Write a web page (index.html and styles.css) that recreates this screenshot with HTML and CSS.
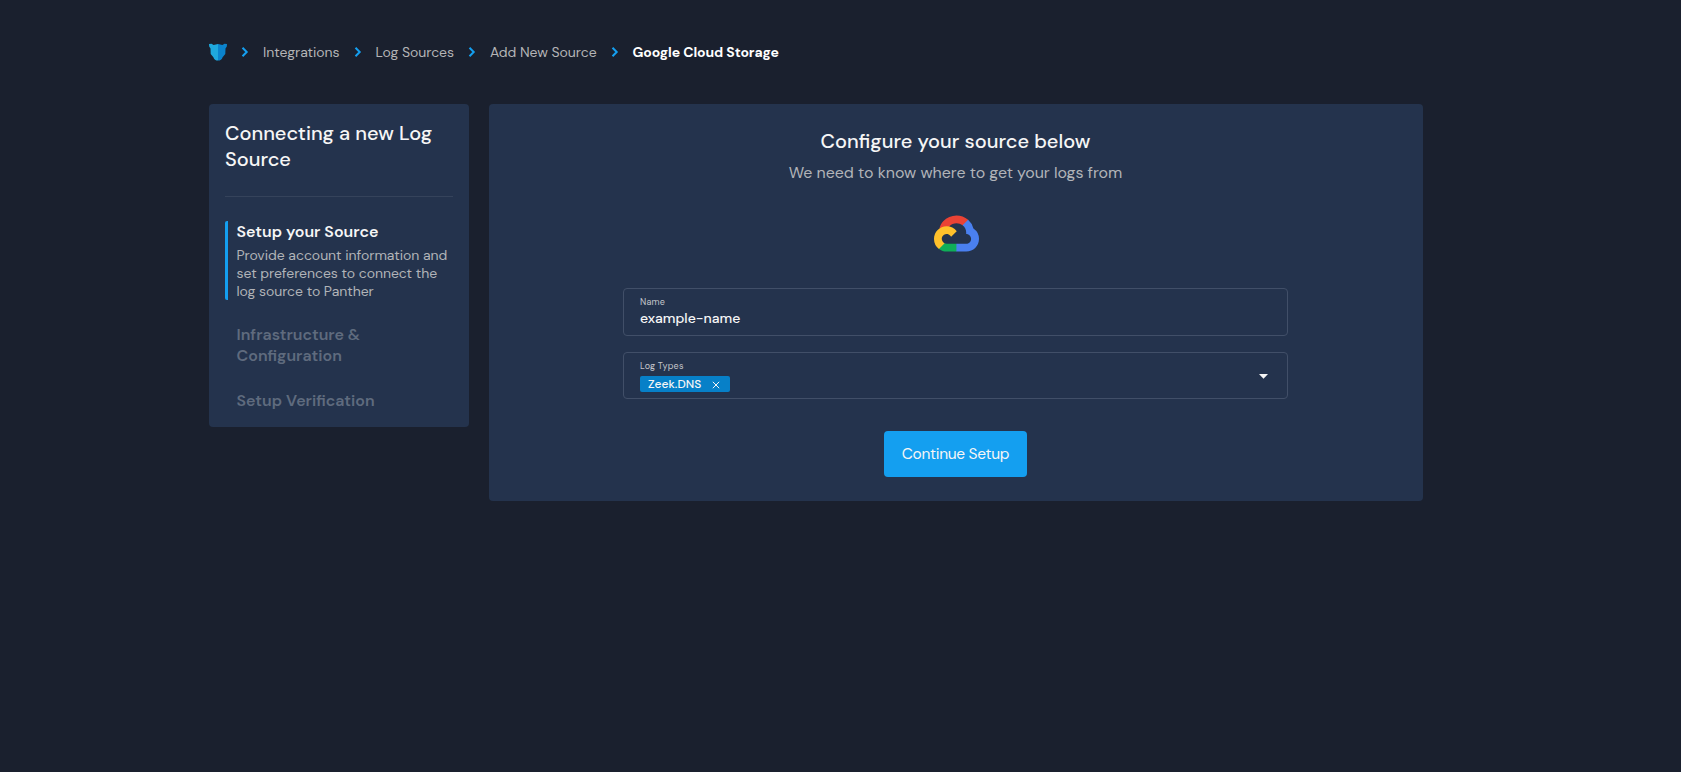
FILE: index.html
```html
<!DOCTYPE html>
<html lang="en">
<head>
<meta charset="utf-8">
<title>Google Cloud Storage</title>
<link rel="stylesheet" href="styles.css">
</head>
<body>
<div class="page">
  <nav class="crumbs">
    <svg class="logo" viewBox="0 0 18 18"><path fill="#1fa8dd" d="M0 1 2.500.700 4.600 1.900 9 1V17.600C6.700 17.600 5 16.600 4.400 14.200L1.700 11 1.500 5.400.2 3.600Z"/><path fill="#0b83cc" d="M18 1 15.500.700 13.400 1.900 9 1V17.600C11.300 17.600 13 16.600 13.600 14.200L16.300 11 16.500 5.400 17.800 3.600Z"/></svg>
    <svg class="chev" viewBox="0 0 8 10"><path d="M1.500 .8 5.700 5 1.500 9.200"/></svg>
    <a>Integrations</a>
    <svg class="chev" viewBox="0 0 8 10"><path d="M1.500 .8 5.700 5 1.500 9.200"/></svg>
    <a>Log Sources</a>
    <svg class="chev" viewBox="0 0 8 10"><path d="M1.500 .8 5.700 5 1.500 9.200"/></svg>
    <a>Add New Source</a>
    <svg class="chev" viewBox="0 0 8 10"><path d="M1.500 .8 5.700 5 1.500 9.200"/></svg>
    <b>Google Cloud Storage</b>
  </nav>
  <div class="columns">
    <aside class="card side">
      <h2>Connecting a new Log Source</h2>
      <ol class="steps">
        <li class="step active"><h3>Setup your Source</h3><p>Provide account information and<br>set preferences to connect the<br>log source to Panther</p></li>
        <li class="step"><h3>Infrastructure &amp;<br>Configuration</h3></li>
        <li class="step"><h3>Setup Verification</h3></li>
      </ol>
    </aside>
    <main class="card main">
      <h1>Configure your source below</h1>
      <p class="sub">We need to know where to get your logs from</p>
      <svg class="gcp" viewBox="0 0 256 206"><path fill="#EA4335" d="M170.252 56.819l22.253-22.253 1.483-9.370C153.437-11.678 88.976-7.500 52.420 33.920 42.267 45.423 34.734 59.764 30.717 74.573l7.970-1.123 44.505-7.340 3.436-3.513c19.797-21.742 53.270-24.667 76.128-6.168l7.496.390z"/><path fill="#4A80F0" d="M224.205 73.918a100.249 100.249 0 0 0-30.217-48.722l-31.232 31.232a55.515 55.515 0 0 1 20.379 44.037v5.544c15.350 0 27.797 12.450 27.797 27.796 0 15.352-12.446 27.573-27.797 27.573h-55.671l-5.466 5.934v33.340l5.466 5.231h55.671c39.930.310 72.553-31.494 72.864-71.424a72.303 72.303 0 0 0-31.794-60.541"/><path fill="#0FAE58" d="M71.870 205.796h55.593V161.290H71.870a27.275 27.275 0 0 1-11.498-2.498l-7.887 2.420-22.409 22.253-1.952 7.574c12.567 9.489 27.900 14.825 43.746 14.757"/><path fill="#FFC12B" d="M71.870 61.425C31.940 61.663-.237 94.228.001 134.158a72.301 72.301 0 0 0 28.222 56.880l32.248-32.246c-13.990-6.322-20.208-22.786-13.887-36.776 6.320-13.990 22.786-20.208 36.775-13.888a27.796 27.796 0 0 1 13.887 13.888l32.248-32.248A72.224 72.224 0 0 0 71.870 61.425"/></svg>
      <div class="field name"><div><label>Name</label><div class="value">example-name</div></div></div>
      <div class="field types"><div><label>Log Types</label>
        <div class="tag">Zeek.DNS<svg viewBox="0 0 8 8"><path d="M.8.8 7.200 7.200M7.200.8.8 7.200"/></svg></div></div>
        <svg class="caret" viewBox="0 0 9 5"><path d="M0 0h9L4.500 4.800Z"/></svg></div>
      <button>Continue Setup</button>
    </main>
  </div>
</div>
</body>
</html>
```
FILE: styles.css
```css
* { box-sizing: border-box; margin: 0; padding: 0; }
body { background: #1a202e; color: #f6f6f6; font-family: "DM Sans", Lato, sans-serif; font-size: 14px; }
.page { width: 1214px; margin-left: 209px; padding-top: 40px; }
.crumbs { display: flex; align-items: center; height: 24px; color: #b4b4b6; }
.crumbs a { letter-spacing: -.05px; }
.crumbs b { color: #fff; font-weight: 700; letter-spacing: -.1px; }
.logo { width: 18px; height: 18px; }
.chev { width: 8px; height: 10px; fill: none; stroke: #149ff0; stroke-width: 2; margin: 0 14px; }
.columns { display: flex; gap: 20px; align-items: flex-start; margin-top: 40px; }
.card { background: #24334d; border-radius: 4px; }
.side { width: 260px; height: 323px; padding: 16px; }
.side h2 { height: 77px; font-size: 20px; line-height: 26px; font-weight: 500; letter-spacing: -.02px; border-bottom: 1px solid #35435b; }
.steps { list-style: none; padding-top: 24px; display: flex; flex-direction: column; gap: 24px; }
.step { border-left: 3px solid transparent; padding-left: 8.500px; color: #5f6b7e; border-radius: 2px; }
.step.active { border-color: #149ff0; color: #f6f6f6; height: 79px; }
.step h3 { font-size: 16px; line-height: 21px; font-weight: 600; }
.step p { margin-top: 4px; line-height: 18px; color: #b1b3b8; letter-spacing: -.04px; }
.main { width: 934px; height: 397px; display: flex; flex-direction: column; align-items: center; padding: 24px 1px 0 0; }
h1 { font-size: 20px; font-weight: 500; line-height: 27px; }
.sub { margin-top: 6px; font-size: 16px; line-height: 24px; color: #b1b3b8; letter-spacing: -.04px; }
.gcp { width: 45px; height: 37px; margin: 30px 0 0 1px; }
.field { width: 665px; display: flex; justify-content: space-between; border: 1px solid #414f68; border-radius: 4px; padding: 7px 19px 0 16px; }
.name { height: 48px; margin-top: 36px; }
.types { height: 47px; margin-top: 16px; }
label { display: block; font-size: 9px; line-height: 12px; letter-spacing: .18px; color: #c3c5ca; }
.value { font-size: 14px; line-height: 20px; font-weight: 500; }
.tag { display: flex; align-items: center; gap: 11px; width: 90px; height: 16px; margin-top: 4px; padding-left: 8px; border-radius: 2px; background: #0780c8; font-size: 12px; font-weight: 500; }
.tag svg { width: 8px; height: 8px; margin-top: 1px; fill: none; stroke: #f6f6f6; stroke-width: 1; }
.caret { width: 9px; height: 5px; margin-top: 14px; fill: #f6f6f6; }
button { width: 143px; height: 46px; margin-top: 32px; border: 0; border-radius: 4px; background: #149ff0; color: #f6f6f6; font: 400 15.500px "DM Sans", Lato, sans-serif; letter-spacing: -.32px; }
```
